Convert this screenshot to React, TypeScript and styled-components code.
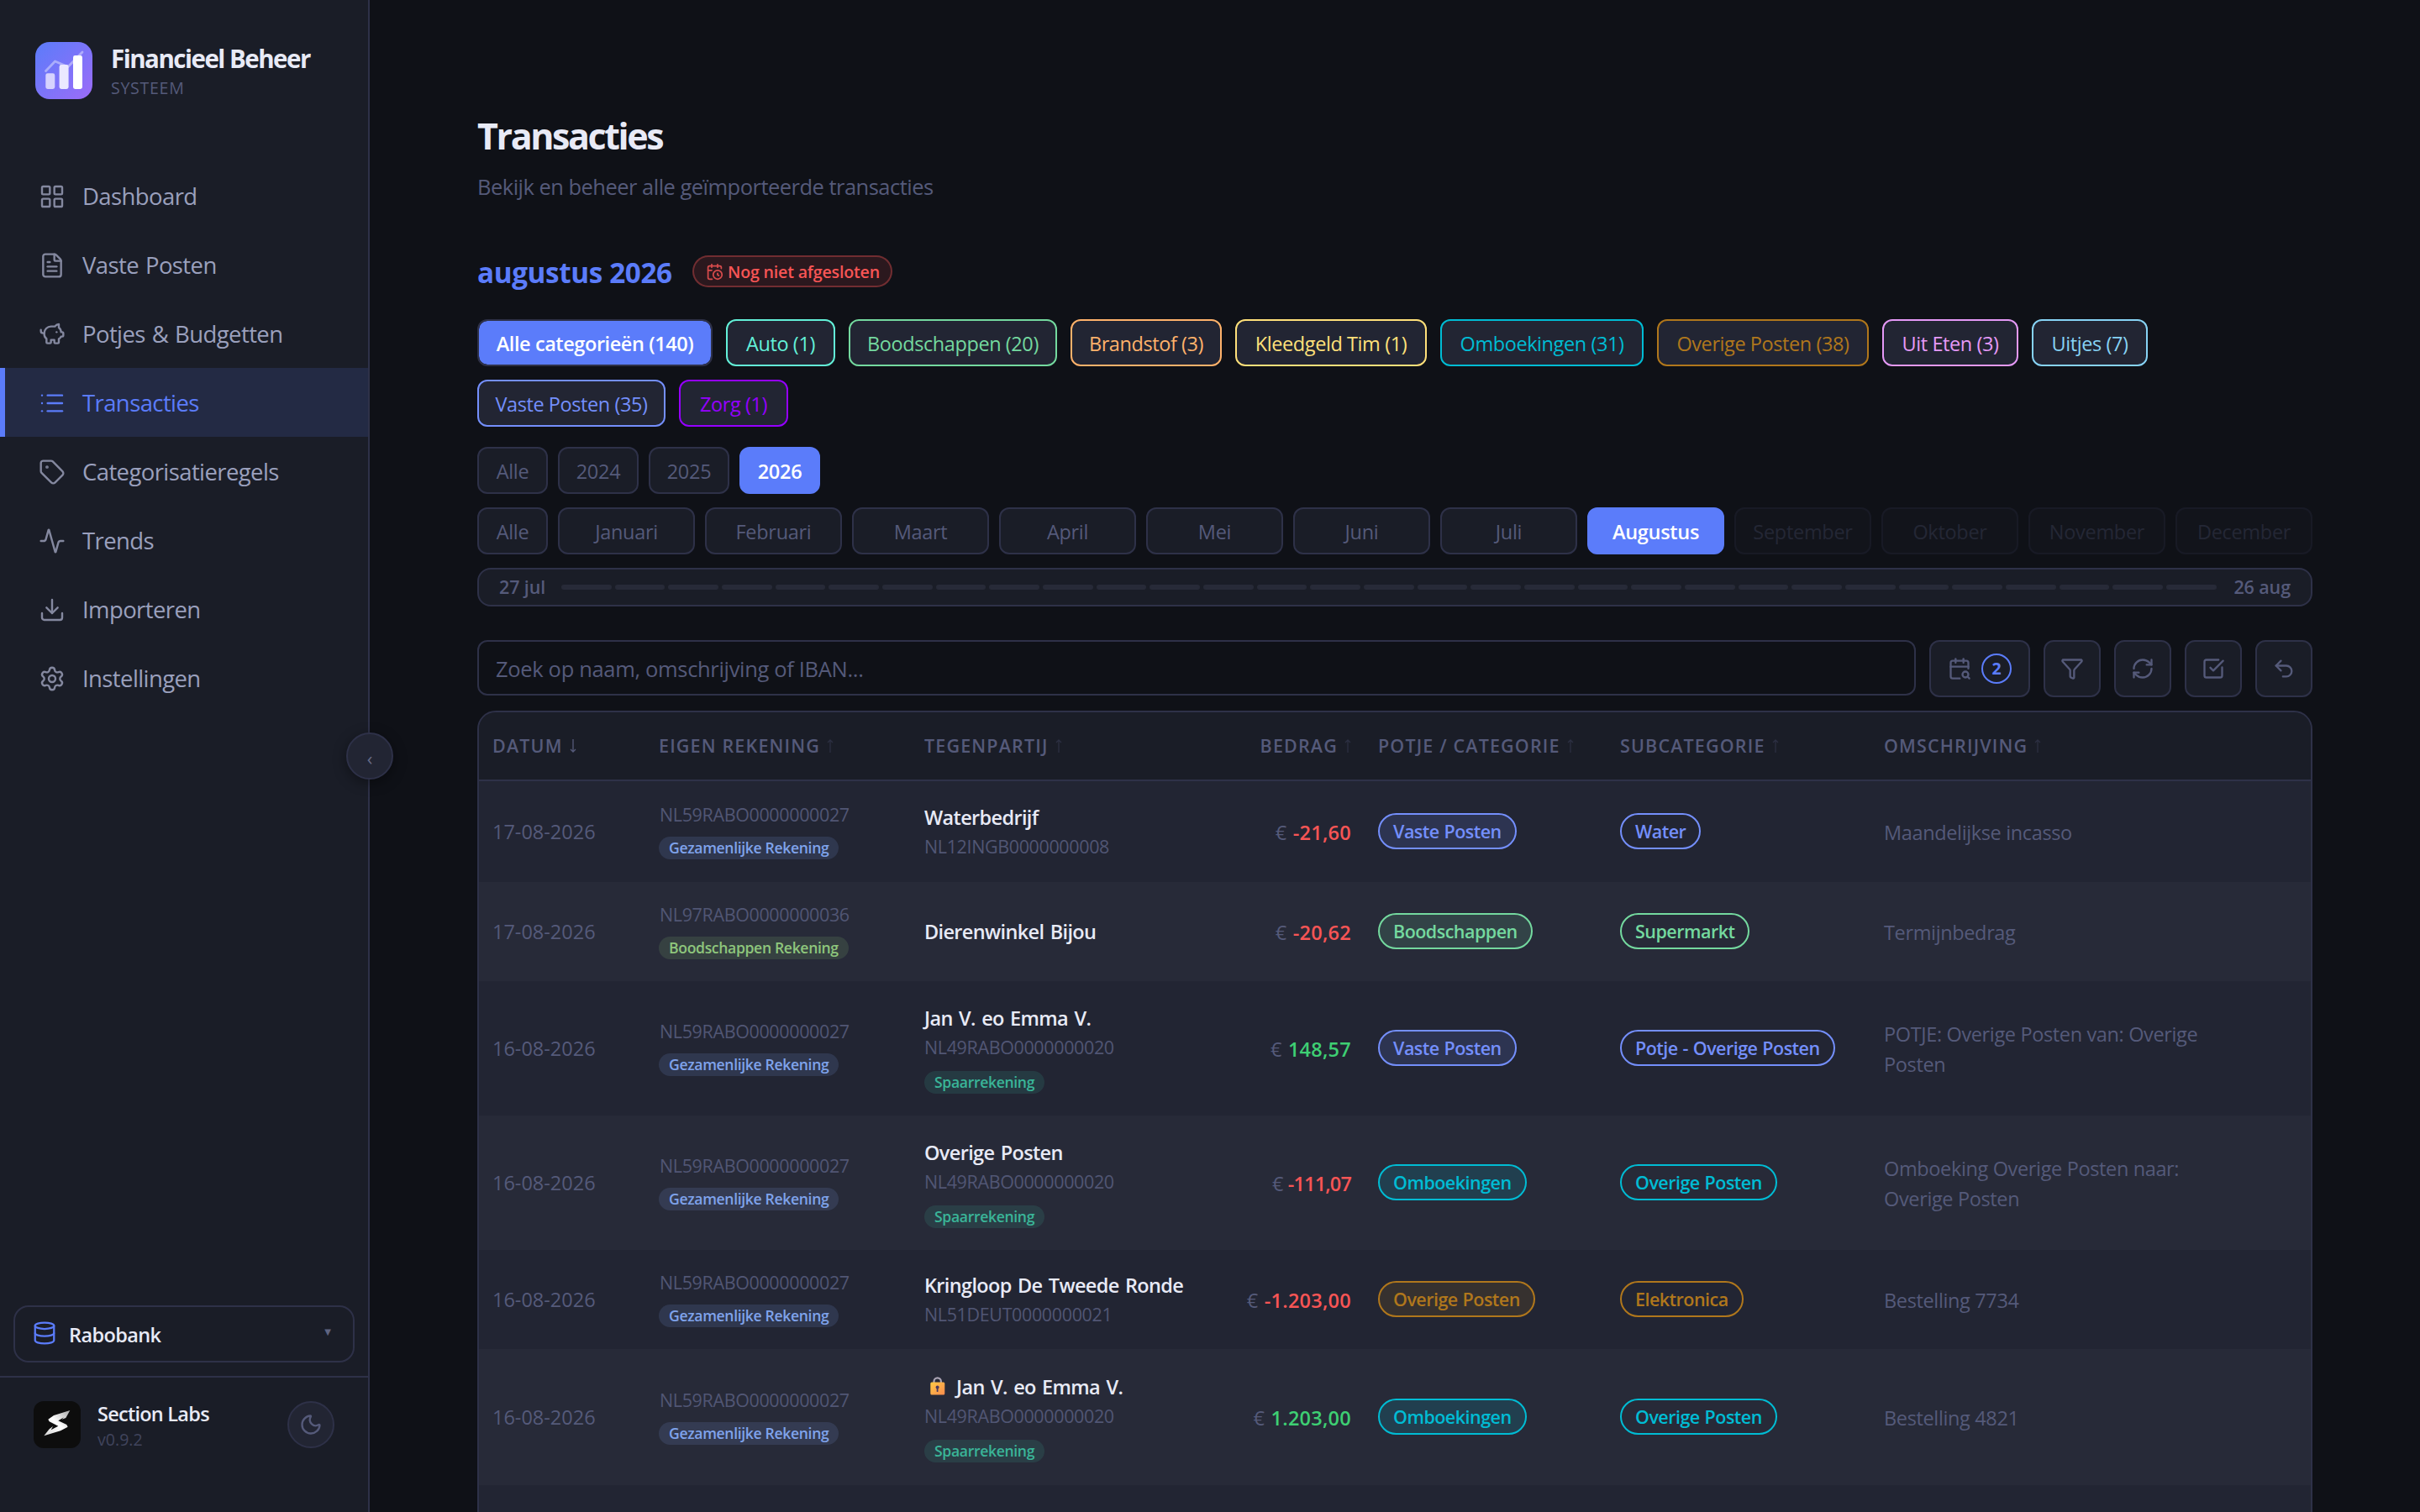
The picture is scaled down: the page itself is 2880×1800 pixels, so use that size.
import React from 'react';
import styled, { createGlobalStyle, css } from 'styled-components';
import {
  Activity,
  CalendarClock,
  CalendarSearch,
  Database,
  Download,
  FileText,
  Funnel,
  LayoutGrid,
  List,
  Moon,
  PiggyBank,
  RefreshCw,
  Settings,
  SquareCheckBig,
  Tag,
  Undo2,
} from 'lucide-react';

const c = {
  bg: '#0f1117',
  surface: '#1a1d27',
  raised: '#222533',
  rowAlt: '#272a38',
  border: '#2e3148',
  accent: '#5b7cfa',
  text: '#e8eaf6',
  soft: '#9aa0bd',
  icon: '#84889f',
  muted: '#555a7a',
  faint: '#515674',
  dim: '#40445c',
  red: '#f75555',
  green: '#3ecf73',
};

const GlobalStyle = createGlobalStyle`
  * { box-sizing: border-box; }
  html, body, #root { margin: 0; height: 100%; }
  body {
    background: ${c.bg};
    color: ${c.text};
    font-family: "Open Sans", "Noto Sans", sans-serif;
    overflow: hidden;
  }
  button, input { font: inherit; }
`;

/* ---------- shell ---------- */

const Shell = styled.div`
  display: grid;
  grid-template-columns: 440px 1fr;
  grid-template-rows: 1800px;
  width: 2880px;
  height: 1800px;
  overflow: hidden;
`;

const Sidebar = styled.aside`
  position: relative;
  display: flex;
  flex-direction: column;
  background: ${c.surface};
  border-right: 2px solid ${c.border};
`;

const Brand = styled.div`
  display: flex;
  align-items: flex-start;
  gap: 22px;
  height: 192px;
  padding: 50px 0 0 42px;
`;

const BrandName = styled.div`
  padding-top: 1px;
  font-size: 29.5px;
  font-weight: 700;
  line-height: 37px;
  letter-spacing: -1.5px;
  white-space: nowrap;
`;

const BrandSub = styled.div`
  font-size: 19.6px;
  line-height: 34px;
  letter-spacing: 0.7px;
  color: ${c.muted};
`;

const Nav = styled.nav`
  display: flex;
  flex-direction: column;
`;

const NavItem = styled.a<{ $active?: boolean }>`
  display: flex;
  align-items: center;
  gap: 20px;
  height: 82px;
  padding-left: 40px;
  border-left: 6px solid ${(p) => (p.$active ? c.accent : 'transparent')};
  background: ${(p) => (p.$active ? 'rgba(91, 124, 250, 0.14)' : 'transparent')};
  color: ${(p) => (p.$active ? c.accent : c.soft)};
  font-size: 27.5px;
  letter-spacing: -0.6px;
  word-spacing: 1.4px;
  white-space: nowrap;

  svg {
    flex: none;
    margin-top: 2px;
    color: ${(p) => (p.$active ? c.accent : c.icon)};
  }
`;

const CollapseButton = styled.button`
  position: absolute;
  top: 872px;
  right: -30px;
  display: flex;
  align-items: center;
  justify-content: center;
  width: 56px;
  height: 56px;
  padding: 3px 0 0;
  border: 2px solid ${c.border};
  border-radius: 50%;
  background: ${c.raised};
  color: #676b87;
  font-size: 22px;
  line-height: 1;
  box-shadow: 0 4px 16px rgba(0, 0, 0, 0.4);
`;

const SidebarFoot = styled.div`
  margin-top: auto;
  height: 246px;
`;

const BankSelect = styled.div`
  display: flex;
  align-items: center;
  height: 68px;
  margin: 0 16px;
  padding: 0 26px 0 20px;
  border: 2px solid ${c.border};
  border-radius: 18px;

  svg {
    margin-top: -2px;
    color: ${c.accent};
  }
`;

const BankName = styled.span`
  flex: 1;
  margin-left: 14px;
  padding-top: 2px;
  font-size: 23.5px;
  font-weight: 600;
  letter-spacing: -0.6px;
`;

const Caret = styled.span`
  margin-top: -6px;
  color: #5f6481;
  font-family: "DejaVu Sans", sans-serif;
  font-size: 10px;
`;

const Profile = styled.div`
  display: flex;
  align-items: flex-start;
  margin-top: 16px;
  padding: 28px 40px 0;
  border-top: 2px solid ${c.border};
`;

const ProfileText = styled.div`
  flex: 1;
  margin-left: 20px;
`;

const ProfileName = styled.div`
  font-size: 23.5px;
  font-weight: 600;
  line-height: 31px;
  letter-spacing: -0.75px;
`;

const Version = styled.div`
  font-size: 19.6px;
  line-height: 29px;
  color: ${c.dim};
`;

const ThemeButton = styled.button`
  display: flex;
  align-items: center;
  justify-content: center;
  width: 56px;
  height: 56px;
  padding: 0;
  border: 2px solid ${c.border};
  border-radius: 50%;
  background: ${c.raised};
  color: ${c.muted};
`;

/* ---------- page ---------- */

const Main = styled.main`
  display: flex;
  flex-direction: column;
  min-width: 0;
  padding: 136px 128px 0;
  overflow: hidden;

  > * { flex: none; }
`;

const Title = styled.h1`
  margin: 0;
  font-size: 43px;
  font-weight: 700;
  line-height: 52px;
  letter-spacing: -2.4px;
`;

const Subtitle = styled.p`
  margin: 16px 0 64px;
  font-size: 25.5px;
  line-height: 36px;
  letter-spacing: -0.52px;
  color: ${c.muted};
`;

const Period = styled.div`
  display: flex;
  align-items: center;
  gap: 24px;
  height: 38px;
  margin-bottom: 38px;
`;

const PeriodName = styled.h2`
  width: 232px;
  margin: 0;
  padding-top: 1px;
  font-size: 33.3px;
  font-weight: 700;
  line-height: 38px;
  letter-spacing: -0.4px;
  white-space: nowrap;
  color: ${c.accent};
`;

const StatusBadge = styled.span`
  display: flex;
  align-items: center;
  gap: 5px;
  width: 238px;
  height: 38px;
  padding-left: 14px;
  border: 2px solid rgba(247, 85, 85, 0.35);
  border-radius: 19px;
  background: rgba(247, 85, 85, 0.12);
  color: ${c.red};
  font-size: 19.6px;
  font-weight: 600;
  letter-spacing: -0.18px;
  white-space: nowrap;

  svg {
    flex: none;
    opacity: 0.85;
  }
`;

const ChipList = styled.div`
  display: flex;
  flex-wrap: wrap;
  gap: 16px;
  margin-bottom: 24px;
`;

const buttonBase = css`
  display: flex;
  align-items: center;
  justify-content: center;
  height: 56px;
  padding: 2px 0 0;
  border-radius: 12px;
  font-size: 23.5px;
  white-space: nowrap;
`;

const Chip = styled.button<{ $color?: string; $width: number }>`
  ${buttonBase}
  width: ${(p) => p.$width}px;
  border: 2px solid ${(p) => p.$color ?? c.border};
  background: ${(p) => (p.$color ? c.raised : c.accent)} padding-box;
  color: ${(p) => p.$color ?? '#fff'};
  font-weight: ${(p) => (p.$color ? 400 : 600)};
  letter-spacing: -0.42px;
`;

const FilterRow = styled.div`
  display: flex;
  gap: 12px;
  margin-bottom: 16px;
`;

const FilterButton = styled.button<{ $active?: boolean; $disabled?: boolean; $width?: number }>`
  ${buttonBase}
  flex: ${(p) => (p.$width ? `0 0 ${p.$width}px` : '1 1 0')};
  min-width: 0;
  border: 2px solid ${(p) => (p.$active ? c.accent : c.border)};
  background: ${(p) => (p.$active ? c.accent : c.surface)};
  color: ${(p) => (p.$active ? '#fff' : c.muted)};
  font-weight: ${(p) => (p.$active ? 600 : 400)};
  letter-spacing: -0.3px;
  opacity: ${(p) => (p.$disabled ? 0.3 : 1)};
`;

const Timeline = styled.div`
  display: flex;
  align-items: center;
  height: 46px;
  margin-bottom: 40px;
  padding: 0 24px;
  border: 2px solid ${c.border};
  border-radius: 16px;
  background: ${c.surface};
  color: ${c.muted};
  font-size: 21.5px;
  font-weight: 600;
`;

const DateLabel = styled.span<{ $width: number; $end?: boolean }>`
  width: ${(p) => p.$width}px;
  padding-bottom: 2px;
  text-align: ${(p) => (p.$end ? 'right' : 'left')};
  letter-spacing: -0.1px;
  white-space: nowrap;
`;

const Days = styled.div`
  display: flex;
  flex: 1;
  gap: 4px;
`;

const Day = styled.span`
  flex: 1;
  height: 6px;
  border-radius: 3px;
  background: #272a38;
`;

const Toolbar = styled.div`
  display: flex;
  gap: 16px;
  height: 68px;
  margin-bottom: 16px;
`;

const Search = styled.input`
  flex: 1;
  height: 66px;
  padding: 2px 20px 0;
  border: 2px solid ${c.border};
  border-radius: 12px;
  background: ${c.bg};
  color: ${c.text};
  font-size: 25.5px;
  letter-spacing: -0.33px;
  outline: none;

  &::placeholder {
    color: ${c.muted};
    opacity: 1;
  }
`;

const ToolButton = styled.button<{ $wide?: boolean }>`
  display: flex;
  align-items: center;
  justify-content: center;
  gap: 12px;
  width: ${(p) => (p.$wide ? 120 : 68)}px;
  height: 68px;
  padding: 0;
  border: 2px solid ${c.border};
  border-radius: 12px;
  background: ${c.surface};
  color: ${c.muted};
`;

const Count = styled.span`
  display: flex;
  align-items: center;
  justify-content: center;
  width: 36px;
  height: 36px;
  border: 2px solid ${c.accent};
  border-radius: 50%;
  color: ${c.accent};
  font-size: 19.6px;
  font-weight: 700;
  line-height: 1;
`;

/* ---------- table ---------- */

const Table = styled.div`
  border: 2px solid ${c.border};
  border-radius: 22px 22px 0 0;
  background: ${c.raised};
  overflow: hidden;
`;

const columns = css`
  display: grid;
  grid-template-columns: 198px 316px 340px 200px 288px 314px 1fr;
  align-items: center;
`;

const HeadRow = styled.div`
  ${columns}
  height: 82px;
  padding-bottom: 2px;
  border-bottom: 2px solid ${c.border};
  background: ${c.surface};
  color: ${c.muted};
  font-size: 21.5px;
  font-weight: 600;
  letter-spacing: 1.15px;
  white-space: nowrap;
`;

const Row = styled.div<{ $height: number; $alt?: boolean }>`
  ${columns}
  height: ${(p) => p.$height}px;
  background: ${(p) => (p.$alt ? c.rowAlt : c.raised)};
`;

const Cell = styled.div<{ $end?: boolean }>`
  padding: 0 16px;
  text-align: ${(p) => (p.$end ? 'right' : 'left')};
`;

const Arrow = styled.span<{ $on?: boolean }>`
  display: inline-flex;
  margin-left: 8px;
  color: ${(p) => (p.$on ? c.muted : '#2c2f42')};
`;

const DateText = styled.div`
  color: ${c.muted};
  font-size: 23.5px;
`;

const Iban = styled.div<{ $tall?: boolean }>`
  padding-left: ${(p) => (p.$tall ? 0 : 1)}px;
  color: ${c.faint};
  font-size: 21.5px;
  line-height: ${(p) => (p.$tall ? 34 : 24)}px;
  letter-spacing: -0.37px;
`;

const AccountTag = styled.span<{ $rgb: string; $top: number }>`
  display: block;
  width: fit-content;
  height: 27px;
  margin-top: ${(p) => p.$top}px;
  padding: 0 12px;
  border-radius: 14px;
  background: rgba(${(p) => p.$rgb}, 0.15);
  color: rgb(${(p) => p.$rgb});
  font-size: 17.6px;
  font-weight: 600;
  line-height: 27px;
  letter-spacing: -0.35px;
  white-space: nowrap;
`;

const Party = styled.div`
  display: flex;
  align-items: center;
  padding-top: 1px;
  font-size: 23.5px;
  font-weight: 600;
  line-height: 35px;
  letter-spacing: -0.65px;
  word-spacing: 1.9px;
  white-space: nowrap;
`;

const Amount = styled.div<{ $positive?: boolean; $tight?: boolean }>`
  padding-top: 2px;
  color: ${(p) => (p.$positive ? c.green : c.red)};
  font-size: 23.5px;
  font-weight: 600;
  letter-spacing: ${(p) => (p.$tight ? -0.85 : 0.25)}px;
  word-spacing: 1px;
  white-space: nowrap;
`;

const Euro = styled.span`
  color: ${c.muted};
  font-weight: 400;
`;

const Pill = styled.span<{ $color: string; $filled?: boolean }>`
  display: block;
  width: fit-content;
  height: 43px;
  margin-bottom: 2px;
  padding: 1px 16px 0;
  border: 2px solid ${(p) => p.$color};
  border-radius: 22px;
  background: ${(p) => (p.$filled ? `${p.$color}26` : 'transparent')};
  color: ${(p) => p.$color};
  font-size: 21.5px;
  font-weight: 600;
  line-height: 38px;
  letter-spacing: -0.52px;
  word-spacing: 0.8px;
  white-space: nowrap;
`;

const Description = styled.div`
  max-width: 400px;
  padding-top: 1px;
  color: ${c.muted};
  font-size: 23.5px;
  line-height: 36px;
  letter-spacing: -0.36px;
`;

/* ---------- drawings ---------- */

const BrandLogo = () => (
  <svg width="68" height="68" viewBox="0 0 68 68">
    <defs>
      <linearGradient id="brand" x1="0" y1="0" x2="1" y2="1">
        <stop offset="0" stopColor="#5b7cfa" />
        <stop offset="1" stopColor="#9c6cf8" />
      </linearGradient>
    </defs>
    <rect width="68" height="68" rx="17" fill="url(#brand)" />
    <polyline
      points="12.5,34.5 23.5,23 39,29.5 56,12"
      fill="none"
      stroke="#fff"
      strokeOpacity="0.4"
      strokeWidth="2.8"
      strokeLinecap="round"
      strokeLinejoin="round"
    />
    <rect x="12.3" y="37.3" width="11" height="18.7" rx="2.4" fill="#d6d2fe" />
    <rect x="28.6" y="27" width="11" height="29" rx="2.4" fill="#ebe8ff" />
    <rect x="45" y="16" width="11" height="40" rx="2.4" fill="#fff" />
  </svg>
);

const SectionLogo = () => (
  <svg width="56" height="56" viewBox="0 0 168 168">
    <defs>
      <linearGradient id="metal" x1="0" y1="1" x2="1" y2="0">
        <stop offset="0" stopColor="#d4d4d4" />
        <stop offset="0.5" stopColor="#ffffff" />
        <stop offset="1" stopColor="#a8a8a8" />
      </linearGradient>
    </defs>
    <rect width="168" height="168" rx="36" fill="#0d0d0d" />
    <path
      d="M130 33 L72 51 L52 65 L56 73 L88 89 L62 103 L69 90 L56 100 L37 124 L96 106 L122 92 L118 84 L88 70 L108 58 L101 65 L115 60 Z"
      fill="url(#metal)"
    />
  </svg>
);

const LockGlyph = styled.svg`
  margin: -3px 13px 0 7px;
`;

const Lock = () => (
  <LockGlyph width="18" height="22" viewBox="0 0 18 22">
    <defs>
      <linearGradient id="lock" x1="0" y1="0" x2="1" y2="1">
        <stop offset="0" stopColor="#ffcb45" />
        <stop offset="1" stopColor="#f98a4e" />
      </linearGradient>
    </defs>
    <path d="M4.5 9V5.5a4.2 4.2 0 0 1 8.4 0V9" fill="none" stroke="#a9a3b3" strokeWidth="2.2" />
    <rect x="0.3" y="6.5" width="17" height="15" rx="1.5" fill="url(#lock)" />
    <circle cx="8.6" cy="12.4" r="2" fill="#4b3a5c" />
    <path d="M8.6 12v5.2" stroke="#4b3a5c" strokeWidth="1.8" strokeLinecap="round" />
  </LockGlyph>
);

const SortArrow = ({ down }: { down?: boolean }) => (
  <Arrow $on={down}>
    <svg width="8" height="16" viewBox="0 0 8 16" fill="none" stroke="currentColor" strokeWidth="1.3">
      <path d={down ? 'M4 0v15M1 12l3 3 3-3' : 'M4 16V1M1 4l3-3 3 3'} />
    </svg>
  </Arrow>
);

/* ---------- data ---------- */

const nav = [
  { label: 'Dashboard', Icon: LayoutGrid },
  { label: 'Vaste Posten', Icon: FileText },
  { label: 'Potjes & Budgetten', Icon: PiggyBank },
  { label: 'Transacties', Icon: List, active: true },
  { label: 'Categorisatieregels', Icon: Tag },
  { label: 'Trends', Icon: Activity },
  { label: 'Importeren', Icon: Download },
  { label: 'Instellingen', Icon: Settings },
];

const hue = {
  auto: '#63f0d8',
  groceries: '#74d99f',
  fuel: '#ffb26b',
  clothing: '#ffe07a',
  transfer: '#00bcd4',
  other: '#b0771c',
  dining: '#e599f7',
  trips: '#87d3f5',
  fixed: '#748ffc',
  care: '#9500ff',
};

const categories = [
  { label: 'Alle categorieën (140)', width: 280 },
  { label: 'Auto (1)', width: 130, color: hue.auto },
  { label: 'Boodschappen (20)', width: 248, color: hue.groceries },
  { label: 'Brandstof (3)', width: 180, color: hue.fuel },
  { label: 'Kleedgeld Tim (1)', width: 228, color: hue.clothing },
  { label: 'Omboekingen (31)', width: 242, color: hue.transfer },
  { label: 'Overige Posten (38)', width: 252, color: hue.other },
  { label: 'Uit Eten (3)', width: 162, color: hue.dining },
  { label: 'Uitjes (7)', width: 138, color: hue.trips },
  { label: 'Vaste Posten (35)', width: 224, color: hue.fixed },
  { label: 'Zorg (1)', width: 130, color: hue.care },
];

const months = [
  'Januari', 'Februari', 'Maart', 'April', 'Mei', 'Juni',
  'Juli', 'Augustus', 'September', 'Oktober', 'November', 'December',
];

const shared = { iban: 'NL59RABO0000000027', name: 'Gezamenlijke Rekening', rgb: '127, 163, 235' };
const groceriesAccount = { iban: 'NL97RABO0000000036', name: 'Boodschappen Rekening', rgb: '142, 198, 124' };
const savingsRgb = '58, 181, 152';

type Tx = {
  date: string;
  own: typeof shared;
  party: string;
  partyIban?: string;
  savings?: boolean;
  locked?: boolean;
  amount: string;
  category: [string, string];
  sub: [string, string];
  description: string;
  height: number;
};

const transactions: Tx[] = [
  {
    date: '17-08-2026', own: shared, party: 'Waterbedrijf', partyIban: 'NL12INGB0000000008', amount: '-21,60',
    category: ['Vaste Posten', hue.fixed], sub: ['Water', hue.fixed], description: 'Maandelijkse incasso', height: 120,
  },
  {
    date: '17-08-2026', own: groceriesAccount, party: 'Dierenwinkel Bijou', amount: '-20,62',
    category: ['Boodschappen', hue.groceries], sub: ['Supermarkt', hue.groceries], description: 'Termijnbedrag', height: 118,
  },
  {
    date: '16-08-2026', own: shared, party: 'Jan V. eo Emma V.', partyIban: 'NL49RABO0000000020', savings: true, amount: '148,57',
    category: ['Vaste Posten', hue.fixed], sub: ['Potje - Overige Posten', hue.fixed],
    description: 'POTJE: Overige Posten van: Overige Posten', height: 160,
  },
  {
    date: '16-08-2026', own: shared, party: 'Overige Posten', partyIban: 'NL49RABO0000000020', savings: true, amount: '-111,07',
    category: ['Omboekingen', hue.transfer], sub: ['Overige Posten', hue.transfer],
    description: 'Omboeking Overige Posten naar: Overige Posten', height: 160,
  },
  {
    date: '16-08-2026', own: shared, party: 'Kringloop De Tweede Ronde', partyIban: 'NL51DEUT0000000021', amount: '-1.203,00',
    category: ['Overige Posten', hue.other], sub: ['Elektronica', hue.other], description: 'Bestelling 7734', height: 118,
  },
  {
    date: '16-08-2026', own: shared, party: 'Jan V. eo Emma V.', partyIban: 'NL49RABO0000000020', savings: true, locked: true, amount: '1.203,00',
    category: ['Omboekingen', hue.transfer], sub: ['Overige Posten', hue.transfer], description: 'Bestelling 4821', height: 162,
  },
];

const TransactionRow = ({ tx, alt }: { tx: Tx; alt: boolean }) => (
  <Row $height={tx.height} $alt={alt}>
    <Cell><DateText>{tx.date}</DateText></Cell>
    <Cell>
      <Iban>{tx.own.iban}</Iban>
      <AccountTag $rgb={tx.own.rgb} $top={14}>{tx.own.name}</AccountTag>
    </Cell>
    <Cell>
      <Party>
        {tx.locked && <Lock />}
        {tx.party}
      </Party>
      {tx.partyIban && <Iban $tall>{tx.partyIban}</Iban>}
      {tx.savings && <AccountTag $rgb={savingsRgb} $top={11}>Spaarrekening</AccountTag>}
    </Cell>
    <Cell $end>
      <Amount $positive={!tx.amount.startsWith('-')} $tight={tx.amount.includes('111')}>
        <Euro>€</Euro> {tx.amount}
      </Amount>
    </Cell>
    <Cell><Pill $color={tx.category[1]} $filled>{tx.category[0]}</Pill></Cell>
    <Cell><Pill $color={tx.sub[1]}>{tx.sub[0]}</Pill></Cell>
    <Cell><Description>{tx.description}</Description></Cell>
  </Row>
);

export default function App() {
  return (
    <>
      <GlobalStyle />
      <Shell>
        <Sidebar>
          <Brand>
            <BrandLogo />
            <div>
              <BrandName>Financieel Beheer</BrandName>
              <BrandSub>SYSTEEM</BrandSub>
            </div>
          </Brand>
          <Nav>
            {nav.map(({ label, Icon, active }) => (
              <NavItem key={label} $active={active}>
                <Icon size={32} strokeWidth={1.8} />
                {label}
              </NavItem>
            ))}
          </Nav>
          <SidebarFoot>
            <BankSelect>
              <Database size={30} strokeWidth={1.8} />
              <BankName>Rabobank</BankName>
              <Caret>▼</Caret>
            </BankSelect>
            <Profile>
              <SectionLogo />
              <ProfileText>
                <ProfileName>Section Labs</ProfileName>
                <Version>v0.9.2</Version>
              </ProfileText>
              <ThemeButton><Moon size={28} strokeWidth={2} /></ThemeButton>
            </Profile>
          </SidebarFoot>
          <CollapseButton>‹</CollapseButton>
        </Sidebar>

        <Main>
          <Title>Transacties</Title>
          <Subtitle>Bekijk en beheer alle geïmporteerde transacties</Subtitle>

          <Period>
            <PeriodName>augustus 2026</PeriodName>
            <StatusBadge>
              <CalendarClock size={21} strokeWidth={2} />
              Nog niet afgesloten
            </StatusBadge>
          </Period>

          <ChipList>
            {categories.map((cat) => (
              <Chip key={cat.label} $color={cat.color} $width={cat.width}>{cat.label}</Chip>
            ))}
          </ChipList>

          <FilterRow>
            <FilterButton $width={84}>Alle</FilterButton>
            <FilterButton $width={96}>2024</FilterButton>
            <FilterButton $width={96}>2025</FilterButton>
            <FilterButton $width={96} $active>2026</FilterButton>
          </FilterRow>

          <FilterRow>
            <FilterButton $width={84}>Alle</FilterButton>
            {months.map((m, i) => (
              <FilterButton key={m} $active={i === 7} $disabled={i > 7}>{m}</FilterButton>
            ))}
          </FilterRow>

          <Timeline>
            <DateLabel $width={74}>27 jul</DateLabel>
            <Days>
              {Array.from({ length: 31 }, (_, i) => <Day key={i} />)}
            </Days>
            <DateLabel $width={88} $end>26 aug</DateLabel>
          </Timeline>

          <Toolbar>
            <Search placeholder="Zoek op naam, omschrijving of IBAN..." />
            <ToolButton $wide>
              <CalendarSearch size={28} />
              <Count>2</Count>
            </ToolButton>
            <ToolButton><Funnel size={28} /></ToolButton>
            <ToolButton><RefreshCw size={28} /></ToolButton>
            <ToolButton><SquareCheckBig size={28} /></ToolButton>
            <ToolButton><Undo2 size={28} /></ToolButton>
          </Toolbar>

          <Table>
            <HeadRow>
              <Cell>DATUM<SortArrow down /></Cell>
              <Cell>EIGEN REKENING<SortArrow /></Cell>
              <Cell>TEGENPARTIJ<SortArrow /></Cell>
              <Cell $end>BEDRAG<SortArrow /></Cell>
              <Cell>POTJE / CATEGORIE<SortArrow /></Cell>
              <Cell>SUBCATEGORIE<SortArrow /></Cell>
              <Cell>OMSCHRIJVING<SortArrow /></Cell>
            </HeadRow>
            {transactions.map((tx, i) => (
              <TransactionRow key={i} tx={tx} alt={i % 2 === 1} />
            ))}
            <Row $height={120} />
          </Table>
        </Main>
      </Shell>
    </>
  );
}
